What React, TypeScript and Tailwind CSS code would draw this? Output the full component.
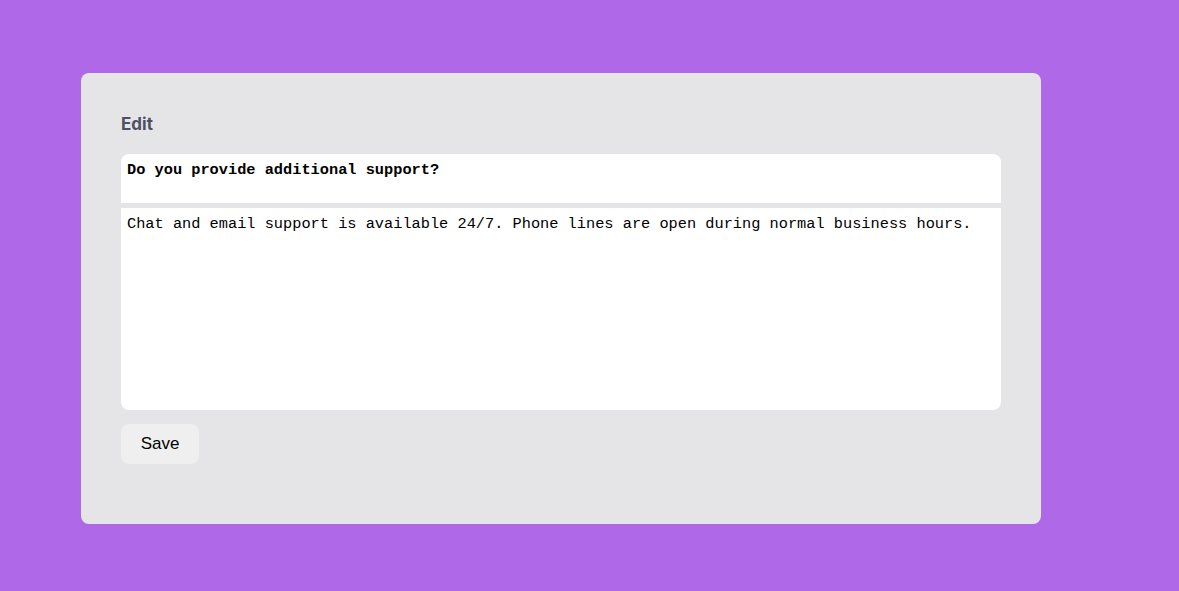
import React, { useState } from 'react'

export default function App() {
  const [question, setQuestion] = useState('Do you provide additional support?')
  const [answer, setAnswer] = useState(
    'Chat and email support is available 24/7. Phone lines are open during normal business hours.'
  )

  return (
    <div className="min-h-screen w-full bg-[#ae68e8] pt-[73px] pl-[81px]">
      <div className="w-[960px] h-[451px] bg-[#e5e5e8] rounded-lg px-10 pt-[41px]">
        <h2 className="text-[17px] font-bold text-[#4f4f63] font-['Inter',sans-serif] leading-5 mb-5">
          Edit
        </h2>

        <div className="flex flex-col gap-[5px]">
          <textarea
            value={question}
            onChange={(e) => setQuestion(e.target.value)}
            className="w-full h-[49px] resize-none bg-white rounded-t-lg px-[6px] pt-[6px] text-[15.3px] leading-5 font-bold text-black font-['Liberation_Mono',monospace] outline-none"
          />
          <textarea
            value={answer}
            onChange={(e) => setAnswer(e.target.value)}
            className="w-full h-[202px] resize-none bg-white rounded-b-lg px-[6px] pt-[6px] text-[15.3px] leading-5 text-black font-['Liberation_Mono',monospace] outline-none"
          />
        </div>

        <button className="mt-[14px] w-[78px] h-10 bg-[#efefef] rounded-lg text-[17px] text-black font-['Liberation_Sans',sans-serif]">
          Save
        </button>
      </div>
    </div>
  )
}
